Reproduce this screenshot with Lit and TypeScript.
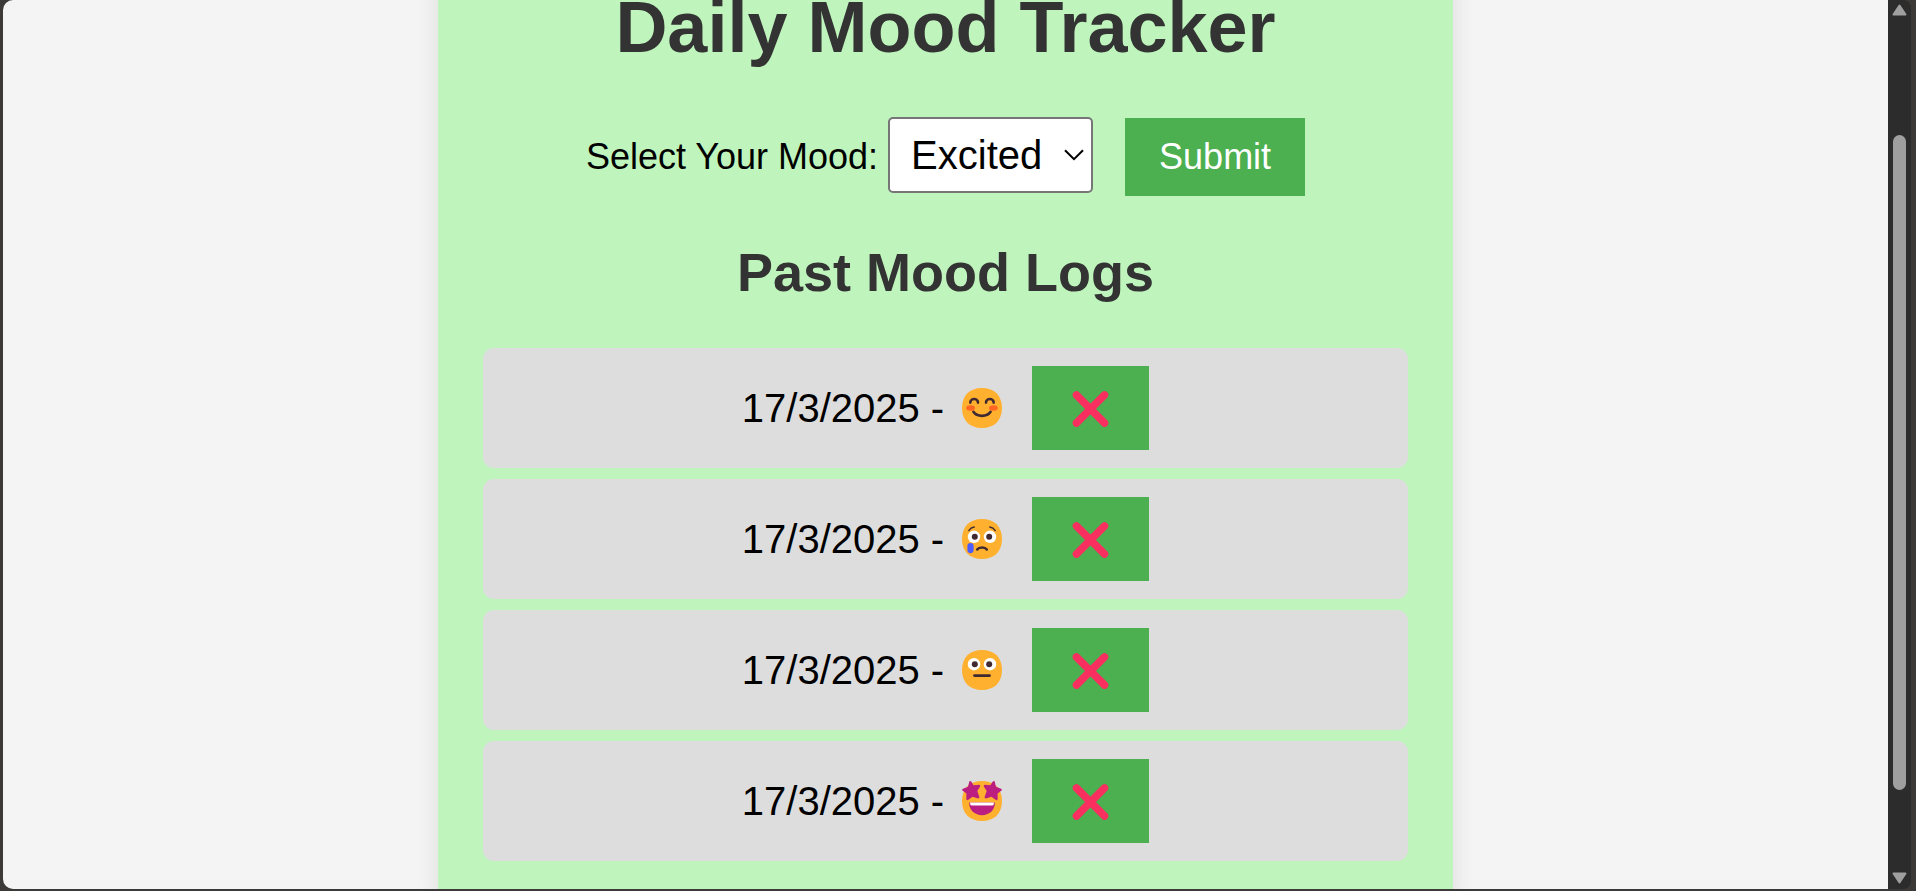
import { LitElement, html, svg, css } from "lit";
import { customElement, state, query } from "lit/decorators.js";

type Mood = "happy" | "sad" | "neutral" | "excited";

interface LogEntry {
  date: string;
  mood: Mood;
}

const INK = "#402a32";

const eyes = (y: number) => svg`
  <circle cx="12" cy=${y} r="6.2" fill="#fff"></circle>
  <circle cx="28" cy=${y} r="6.2" fill="#fff"></circle>
  <circle cx="12.8" cy=${y} r="3" fill=${INK}></circle>
  <circle cx="27.2" cy=${y} r="3" fill=${INK}></circle>`;

const STAR =
  "M7.4 0.2 Q8.4 -0.4 9.2 0.6 L11.6 4.2 L17.2 3.8 Q18.8 4.2 18.2 5.6 L15.3 10 L17.4 16 Q17.5 17.6 16 17.4 L10.6 15.8 L6 19 Q4.5 19.6 4.3 18 L4.4 12.6 L0.4 9.6 Q-0.5 8.4 1 7.8 L6 5.8 Z";

const FACES = {
  happy: svg`
    <ellipse cx="8.6" cy="20" rx="4.4" ry="2.7" fill="#ff6723"></ellipse>
    <ellipse cx="31.4" cy="20" rx="4.4" ry="2.7" fill="#ff6723"></ellipse>
    <g fill="none" stroke=${INK} stroke-width="2.6" stroke-linecap="round">
      <path d="M8.3 14.6 C8.3 9.8 16 9.8 16 14.6"></path>
      <path d="M24 14.6 C24 9.8 31.7 9.8 31.7 14.6"></path>
      <path d="M11.4 23.8 C15 29.2 25 29.2 28.6 23.8"></path>
    </g>`,
  sad: svg`
    ${eyes(17.8)}
    <rect x="5.4" y="24" width="6.2" height="10.2" rx="3.1" fill="#4d5cff"></rect>
    <g fill="none" stroke=${INK} stroke-linecap="round">
      <path d="M6.8 11.6 Q8.6 8.6 12.2 8" stroke-width="1.4"></path>
      <path d="M33.2 11.6 Q31.4 8.6 27.8 8" stroke-width="1.4"></path>
      <path d="M15.2 30.4 C17 27.8 23 27.8 24.8 30.4" stroke-width="2.6"></path>
    </g>`,
  neutral: svg`
    ${eyes(14.2)}
    <path d="M12.4 25.6 H27.6" fill="none" stroke=${INK} stroke-width="2.6" stroke-linecap="round"></path>`,
  excited: svg`
    <path d=${STAR} fill="#bb1d80"></path>
    <path d=${STAR} fill="#bb1d80" transform="translate(40 0) scale(-1 1)"></path>
    <path d="M7.2 21.6 H32.8 C33.2 38.4 6.8 38.4 7.2 21.6 Z" fill="#bb1d80"></path>
    <path d="M8 21.6 H32 Q32 24.4 30.4 24.4 H9.6 Q8 24.4 8 21.6 Z" fill="#fff"></path>`,
};

const LABELS: Record<Mood, string> = {
  happy: "Happy",
  sad: "Sad",
  neutral: "Neutral",
  excited: "Excited",
};

@customElement("mood-face")
export class MoodFace extends LitElement {
  static properties = { mood: { type: String } };
  declare mood: Mood;

  static styles = css`
    :host {
      display: block;
      width: 40px;
      height: 40px;
    }
    .face {
      display: block;
      width: 100%;
      height: 100%;
      overflow: visible;
    }
  `;

  render() {
    return html`<svg class="face" viewBox="0 0 40 40" role="img" aria-label=${LABELS[this.mood]}>
      <path
        d="M20 0 C32.4 0 40 7.6 40 20 C40 32.4 32.4 40 20 40 C7.6 40 0 32.4 0 20 C0 7.6 7.6 0 20 0 Z"
        fill="#ffb02e"
      ></path>
      ${FACES[this.mood]}
    </svg>`;
  }
}

@customElement("app-root")
export class AppRoot extends LitElement {
  @state() private logs: LogEntry[] = [
    { date: "17/3/2025", mood: "happy" },
    { date: "17/3/2025", mood: "sad" },
    { date: "17/3/2025", mood: "neutral" },
    { date: "17/3/2025", mood: "excited" },
  ];
  @state() private choice: Mood = "excited";
  @query(".page") private page!: HTMLElement;

  static styles = css`
    :host {
      display: flex;
      box-sizing: border-box;
      height: 100vh;
      padding: 0 5px 2px 3px;
      background: #3b3a39;
      font-family: "Liberation Sans", Arial, sans-serif;
      color: #000;
    }
    .page {
      flex: 1;
      overflow-y: auto;
      scrollbar-width: none;
      border-radius: 10px 0 0 10px;
      background: #f4f4f4;
    }
    .card {
      box-sizing: border-box;
      max-width: 1015px;
      margin: 45px auto;
      padding: 93px 45px 60px;
      background: #bff5bd;
      border-radius: 22px;
      box-shadow: 0 0 23px rgba(0, 0, 0, 0.1);
      text-align: center;
    }
    .title,
    .subtitle {
      margin: 0;
      color: #333;
      font-weight: bold;
    }
    .title {
      font-size: 72px;
      line-height: 84px;
    }
    .subtitle {
      margin: 45px 0;
      font-size: 54px;
      line-height: 62px;
    }
    .form {
      display: flex;
      justify-content: center;
      align-items: baseline;
      margin-top: 48px;
      font-size: 36px;
      line-height: 42px;
    }
    .picker {
      display: inline-grid;
      align-items: center;
      margin: 0 32px 0 10px;
    }
    .select {
      grid-area: 1 / 1;
      appearance: none;
      margin: 0;
      padding: 13px 48px 13px 21px;
      border: 2px solid #767676;
      border-radius: 5px;
      background: #fff;
      color: #000;
      font: 40px/46px "Liberation Sans", Arial, sans-serif;
    }
    .chevron {
      grid-area: 1 / 1;
      justify-self: end;
      width: 20px;
      height: 12px;
      margin-right: 9px;
      pointer-events: none;
    }
    .button {
      margin: 0;
      border: 0;
      background: #4caf50;
      color: #fff;
      font: 36px/42px "Liberation Sans", Arial, sans-serif;
      cursor: pointer;
    }
    .submit {
      padding: 18px 34px;
    }
    .logs {
      display: flex;
      flex-direction: column;
      gap: 11px;
      margin: 0;
      padding: 0;
      list-style: none;
    }
    .log {
      display: flex;
      justify-content: center;
      align-items: center;
      padding: 18px;
      border-radius: 11px;
      background: #ddd;
      font-size: 40px;
      line-height: 46px;
    }
    .mood {
      margin: 0 30px 0 18px;
    }
    .remove {
      padding: 25px 40px 23px;
    }
    .cross {
      display: block;
      width: 37px;
      height: 36px;
    }
    .scrollbar {
      display: flex;
      flex-direction: column;
      align-items: center;
      justify-content: space-between;
      width: 23px;
      padding: 4px 0 5px;
      box-sizing: border-box;
      border-radius: 0 8px 8px 0;
      background: #2c2c2c;
    }
    .arrow {
      display: block;
      width: 15px;
      height: 12px;
    }
    .track {
      display: flex;
      flex-direction: column;
      flex: 1;
      padding: 6px 0;
    }
    .before {
      flex: 113;
    }
    .thumb {
      flex: 655;
      width: 13px;
      border-radius: 7px;
      background: #9f9f9f;
    }
    .after {
      flex: 76;
    }
  `;

  protected firstUpdated() {
    this.page.scrollTop = 153;
  }

  private submit(event: Event) {
    event.preventDefault();
    const date = new Date().toLocaleDateString("en-AU");
    this.logs = [...this.logs, { date, mood: this.choice }];
  }

  private remove(index: number) {
    this.logs = this.logs.filter((_, i) => i !== index);
  }

  render() {
    return html`
      <main class="page">
        <section class="card">
          <h1 class="title">Daily Mood Tracker</h1>
          <form class="form" @submit=${this.submit}>
            <label for="mood">Select Your Mood:</label>
            <span class="picker">
              <select
                class="select"
                id="mood"
                @change=${(e: Event) => (this.choice = (e.target as HTMLSelectElement).value as Mood)}
              >
                ${(Object.keys(LABELS) as Mood[]).map(
                  (m) => html`<option value=${m} ?selected=${m === this.choice}>${LABELS[m]}</option>`
                )}
              </select>
              <svg class="chevron" viewBox="0 0 20 12" aria-hidden="true">
                <path d="M1 1.2 L10 10.2 L19 1.2" fill="none" stroke="#000" stroke-width="2"></path>
              </svg>
            </span>
            <button class="button submit" type="submit">Submit</button>
          </form>
          <h2 class="subtitle">Past Mood Logs</h2>
          <ul class="logs">
            ${this.logs.map(
              (log, i) => html`<li class="log">
                <span>${log.date} -</span>
                <mood-face class="mood" .mood=${log.mood}></mood-face>
                <button
                  class="button remove"
                  type="button"
                  aria-label="Delete entry"
                  @click=${() => this.remove(i)}
                >
                  <svg class="cross" viewBox="0 0 36 36" aria-hidden="true">
                    <path
                      d="M4 4 L32 32 M32 4 L4 32"
                      fill="none"
                      stroke="#f92f60"
                      stroke-width="7.6"
                      stroke-linecap="round"
                    ></path>
                  </svg>
                </button>
              </li>`
            )}
          </ul>
        </section>
      </main>
      <div class="scrollbar" aria-hidden="true">
        <svg class="arrow" viewBox="0 0 15 12">
          <path d="M7.5 1.5 L13.5 10.5 H1.5 Z" fill="#9f9f9f" stroke="#9f9f9f" stroke-width="2" stroke-linejoin="round"></path>
        </svg>
        <div class="track">
          <div class="before"></div>
          <div class="thumb"></div>
          <div class="after"></div>
        </div>
        <svg class="arrow" viewBox="0 0 15 12">
          <path d="M7.5 10.5 L13.5 1.5 H1.5 Z" fill="#9f9f9f" stroke="#9f9f9f" stroke-width="2" stroke-linejoin="round"></path>
        </svg>
      </div>
    `;
  }
}
